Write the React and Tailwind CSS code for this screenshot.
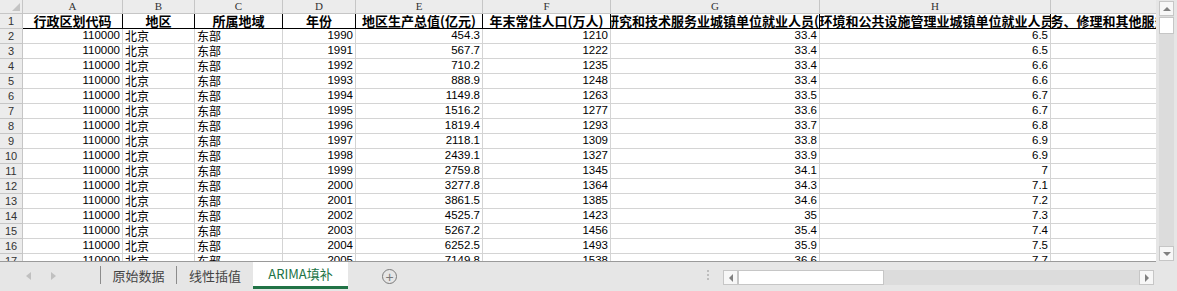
import React from 'react';

const cols = [
  { key: 'A', w: 'w-[100px]' },
  { key: 'B', w: 'w-[72px]' },
  { key: 'C', w: 'w-[88px]' },
  { key: 'D', w: 'w-[73px]' },
  { key: 'E', w: 'w-[127px]' },
  { key: 'F', w: 'w-[128px]' },
  { key: 'G', w: 'w-[209px]' },
  { key: 'H', w: 'w-[231px]' },
  { key: 'I', w: 'w-[231px]' },
];

const titles = [
  '行政区划代码',
  '地区',
  '所属地域',
  '年份',
  '地区生产总值(亿元)',
  '年末常住人口(万人)',
  '科学研究和技术服务业城镇单位就业人员(万人)',
  '水利、环境和公共设施管理业城镇单位就业人员(万人)',
  '居民服务、修理和其他服务业城镇单位就业人员(万人)',
];

// 年份, 地区生产总值, 年末常住人口, 科研就业, 水利就业
const rows = [
  [1990, '454.3', 1210, '33.4', '6.5'],
  [1991, '567.7', 1222, '33.4', '6.5'],
  [1992, '710.2', 1235, '33.4', '6.6'],
  [1993, '888.9', 1248, '33.4', '6.6'],
  [1994, '1149.8', 1263, '33.5', '6.7'],
  [1995, '1516.2', 1277, '33.6', '6.7'],
  [1996, '1819.4', 1293, '33.7', '6.8'],
  [1997, '2118.1', 1309, '33.8', '6.9'],
  [1998, '2439.1', 1327, '33.9', '6.9'],
  [1999, '2759.8', 1345, '34.1', '7'],
  [2000, '3277.8', 1364, '34.3', '7.1'],
  [2001, '3861.5', 1385, '34.6', '7.2'],
  [2002, '4525.7', 1423, '35', '7.3'],
  [2003, '5267.2', 1456, '35.4', '7.4'],
  [2004, '6252.5', 1493, '35.9', '7.5'],
  [2005, '7149.8', 1538, '36.6', '7.7'],
];

const cjk = "font-['Noto_Sans_CJK_SC',sans-serif]";
const num = "font-['Liberation_Sans',sans-serif] text-[11.5px]";

const RowHead = ({ children }) => (
  <div className="w-[23px] shrink-0 h-[15px] flex items-center justify-center bg-[#ececec] border-r border-b border-[#c6c6c6] font-['Liberation_Sans',sans-serif] text-[11px] text-[#333]">
    {children}
  </div>
);

const NumCell = ({ w, v }) => (
  <div className={`${w} shrink-0 h-[15px] flex items-center justify-end pr-[2px] border-r border-b border-[#d4d4d4] text-black ${num}`}>
    {v}
  </div>
);

const TextCell = ({ w, v }) => (
  <div className={`${w} shrink-0 h-[15px] flex items-center pl-[2px] border-r border-b border-[#d4d4d4] text-black text-[12px] leading-[14px] ${cjk}`}>
    {v}
  </div>
);

const Sheet = () => (
  <div className="w-[1156px] h-[262px] overflow-hidden bg-white border-b border-[#9a9a9a]">
    {/* column letters */}
    <div className="flex h-[14px]">
      <div className="w-[23px] shrink-0 h-[14px] bg-[#ececec] border-r border-b border-[#c6c6c6] flex items-end justify-end p-[2px]">
        <div className="w-0 h-0 border-l-[8px] border-l-transparent border-b-[8px] border-b-[#c4c4c4]" />
      </div>
      {cols.map((c) => (
        <div
          key={c.key}
          className={`${c.w} shrink-0 h-[14px] bg-[#ececec] border-r border-b border-[#c6c6c6] flex items-center justify-center font-['Liberation_Serif',serif] text-[11px] text-[#333]`}
        >
          {c.key}
        </div>
      ))}
    </div>

    {/* row 1: titles */}
    <div className="flex h-[15px]">
      <RowHead>1</RowHead>
      {cols.map((c, i) => (
        <div
          key={c.key}
          className={`${c.w} shrink-0 h-[15px] overflow-hidden flex items-center justify-center border-r border-b border-black`}
        >
          <span className={`shrink-0 whitespace-nowrap font-bold text-[13px] leading-[14px] text-black ${cjk}`}>
            {titles[i]}
          </span>
        </div>
      ))}
    </div>

    {rows.map((r, i) => (
      <div key={i} className="flex h-[15px]">
        <RowHead>{i + 2}</RowHead>
        <NumCell w="w-[100px]" v="110000" />
        <TextCell w="w-[72px]" v="北京" />
        <TextCell w="w-[88px]" v="东部" />
        <NumCell w="w-[73px]" v={r[0]} />
        <NumCell w="w-[127px]" v={r[1]} />
        <NumCell w="w-[128px]" v={r[2]} />
        <NumCell w="w-[209px]" v={r[3]} />
        <NumCell w="w-[231px]" v={r[4]} />
        <NumCell w="w-[231px]" v="" />
      </div>
    ))}
  </div>
);

const VScroll = () => (
  <div className="w-[21px] h-[262px] flex flex-col items-center pt-[1px] pb-[1px]">
    <div className="w-[15px] flex-1 flex flex-col bg-[#dcdcdc]">
      <div className="h-[15px] bg-[#f7f7f7] border border-[#c6c6c6] flex items-center justify-center">
        <div className="w-0 h-0 border-l-[4px] border-r-[4px] border-b-[4px] border-l-transparent border-r-transparent border-b-[#808080]" />
      </div>
      <div className="h-[17px] bg-white border border-[#c6c6c6] mt-[1px]" />
      <div className="flex-1" />
      <div className="h-[15px] bg-[#f7f7f7] border border-[#c6c6c6] flex items-center justify-center">
        <div className="w-0 h-0 border-l-[4px] border-r-[4px] border-t-[4px] border-l-transparent border-r-transparent border-t-[#808080]" />
      </div>
    </div>
  </div>
);

const TabBar = () => (
  <div className={`h-[29px] flex items-start text-[13px] ${cjk}`}>
    <div className="w-[100px] h-[27px] flex items-center pl-[26px] gap-[20px]">
      <div className="w-0 h-0 border-t-[4px] border-b-[4px] border-r-[5px] border-t-transparent border-b-transparent border-r-[#c0c0c0]" />
      <div className="w-0 h-0 border-t-[4px] border-b-[4px] border-l-[5px] border-t-transparent border-b-transparent border-l-[#c0c0c0]" />
    </div>
    <div className="w-px h-[18px] mt-[4px] bg-[#8c8c8c]" />
    <div className="w-[75px] h-[27px] flex items-center justify-center text-[#444]">原始数据</div>
    <div className="w-px h-[18px] mt-[4px] bg-[#8c8c8c]" />
    <div className="w-[76px] h-[27px] flex items-center justify-center text-[#444]">线性插值</div>
    <div className="w-[95px] h-[27px] bg-white border-b-[3px] border-[#217346] flex items-center justify-center text-[#217346]">
      ARIMA填补
    </div>
    <div className="w-[34px]" />
    <div className="w-[15px] h-[15px] mt-[7px] rounded-full border border-[#7a7a7a] flex items-center justify-center text-[#7a7a7a] text-[14px] leading-none font-['Liberation_Sans',sans-serif]">
      +
    </div>
    <div className="w-[310px]" />
    <div className="flex flex-col gap-[2px] mt-[8px]">
      <div className="w-[2px] h-[2px] bg-[#bdbdbd]" />
      <div className="w-[2px] h-[2px] bg-[#bdbdbd]" />
      <div className="w-[2px] h-[2px] bg-[#bdbdbd]" />
    </div>
    <div className="w-[14px]" />
    <div className="w-[431px] h-[15px] mt-[8px] flex bg-[#dcdcdc]">
      <div className="w-[15px] h-[15px] bg-[#f7f7f7] border border-[#c6c6c6] flex items-center justify-center">
        <div className="w-0 h-0 border-t-[4px] border-b-[4px] border-r-[4px] border-t-transparent border-b-transparent border-r-[#808080]" />
      </div>
      <div className="w-[146px] h-[15px] bg-white border border-[#c6c6c6]" />
      <div className="flex-1" />
      <div className="w-[15px] h-[15px] bg-[#f7f7f7] border border-[#c6c6c6] flex items-center justify-center">
        <div className="w-0 h-0 border-t-[4px] border-b-[4px] border-l-[4px] border-t-transparent border-b-transparent border-l-[#808080]" />
      </div>
    </div>
  </div>
);

const App = () => (
  <div className="w-[1177px] h-[291px] overflow-hidden bg-[#e6e6e6] flex flex-col">
    <div className="flex">
      <Sheet />
      <VScroll />
    </div>
    <TabBar />
  </div>
);

export default App;
